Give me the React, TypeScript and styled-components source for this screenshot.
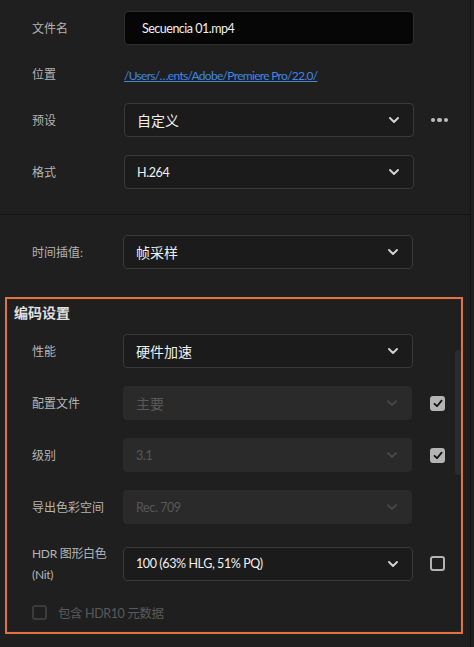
import React from "react";
import styled, { createGlobalStyle } from "styled-components";

const Global = createGlobalStyle`
  html, body { margin: 0; padding: 0; background: #1f1f1f; }
  body { font-family: "Lato", "Noto Sans CJK SC", sans-serif; }
  * { box-sizing: border-box; }
`;

const Page = styled.div`
  width: 474px;
  height: 647px;
  background: #1f1f1f;
  display: flex;
  overflow: hidden;
`;

const Panel = styled.div`
  width: 471px;
  border-right: 1px solid #121212;
  display: flex;
  flex-direction: column;
`;

const Top = styled.div`
  display: flex;
  flex-direction: column;
  padding-bottom: 25px;
  border-bottom: 1px solid #151515;
`;

const Row = styled.div<{ $mt: number; $left?: number }>`
  display: grid;
  grid-template-columns: ${(p) => (p.$left ?? 92)}px 290px 34px;
  align-items: center;
  height: 34px;
  margin-top: ${(p) => p.$mt}px;
  padding-left: 32px;
`;

const Label = styled.div`
  color: #b4b4b4;
  font-size: 12px;
  line-height: 16px;
  padding-top: 1px;
  font-family: "Lato", "Noto Sans CJK SC", sans-serif;
`;

const FileInput = styled.div`
  height: 34px;
  background: #060606;
  border: 1px solid #2e2e2e;
  border-radius: 4px;
  color: #f0f0f0;
  font-size: 12.5px;
  letter-spacing: -0.5px;
  display: flex;
  align-items: center;
  padding-left: 17px;
`;

const Link = styled.a`
  color: #4286e0;
  text-decoration: underline;
  font-size: 12px;
  white-space: nowrap;
  letter-spacing: -0.7px;
  padding-top: 2px;
`;

const Select = styled.div<{ $disabled?: boolean; $big?: boolean }>`
  height: 34px;
  width: ${(p) => (p.$disabled ? "289px" : "290px")};
  border-radius: 4px;
  background: ${(p) => (p.$disabled ? "#2a2a2a" : "#1b1b1b")};
  border: 1px solid ${(p) => (p.$disabled ? "#2a2a2a" : "#393939")};
  display: flex;
  align-items: center;
  justify-content: space-between;
  padding: 0 13px 0 12px;
  color: ${(p) => (p.$disabled ? "#585858" : "#f0f0f0")};
  font-size: ${(p) => (p.$big ? "14px" : "12.5px")};
  letter-spacing: ${(p) => (p.$big ? "0" : "-0.4px")};
`;

const Chevron = ({ disabled }: { disabled?: boolean }) => (
  <svg width="12" height="8" viewBox="0 0 12 8">
    <path
      d="M2 2 L6 6 L10 2"
      fill="none"
      stroke={disabled ? "#454545" : "#d0d0d0"}
      strokeWidth="2"
      strokeLinecap="round"
      strokeLinejoin="round"
    />
  </svg>
);

const More = styled.div`
  display: flex;
  gap: 2px;
  margin-left: 17px;
  span {
    width: 4.5px;
    height: 4.5px;
    border-radius: 50%;
    background: #bdbdbd;
  }
`;

const Box = styled.div`
  position: relative;
  margin: 28px 7px 0 5px;
  height: 337px;
  border: 2px solid #dc7443;
  box-shadow: inset 0 0 0 1px #2a201c;
  display: flex;
  flex-direction: column;
`;

const Header = styled.div`
  color: #e0e0e0;
  font-weight: 700;
  font-size: 14px;
  line-height: 20px;
  margin-top: 3px;
  padding-left: 7px;
  font-family: "Noto Sans CJK SC", sans-serif;
`;

const BoxRow = styled.div<{ $mt: number }>`
  display: grid;
  grid-template-columns: 91px 290px 34px;
  align-items: center;
  height: 34px;
  margin-top: ${(p) => p.$mt}px;
  padding-left: 25px;
`;

const Check = styled.div<{ $checked?: boolean; $disabled?: boolean }>`
  width: 15px;
  height: 15px;
  border-radius: 3px;
  margin-left: 17px;
  border: 2px solid ${(p) => (p.$disabled ? "#3c3c3c" : "#b4b4b4")};
  background: ${(p) => (p.$checked ? "#b4b4b4" : "transparent")};
  display: flex;
  align-items: center;
  justify-content: center;
`;

const Tick = () => (
  <svg width="10" height="9" viewBox="0 0 10 9">
    <path d="M1.5 4.8 L4 7.2 L8.6 1.6" fill="none" stroke="#111" strokeWidth="1.8" strokeLinecap="round" strokeLinejoin="round" />
  </svg>
);

const HdrRow = styled.div`
  display: flex;
  align-items: center;
  margin-top: 27px;
  padding-left: 25px;
  gap: 11px;
  ${Check} { margin-left: 0; }
`;

const DimText = styled.span`
  color: #5a5a5a;
  font-size: 12.5px;
  letter-spacing: -0.4px;
`;

const Thumb = styled.div`
  position: absolute;
  right: 0;
  top: 51px;
  width: 6px;
  height: 125px;
  border-radius: 3px;
  background: #2b2b2b;
`;

const TwoLine = styled(Label)`
  line-height: 21px;
  letter-spacing: -0.3px;
`;

export default function App() {
  return (
    <Page>
      <Global />
      <Panel>
        <Top>
          <Row $mt={11}>
            <Label>文件名</Label>
            <FileInput>Secuencia 01.mp4</FileInput>
          </Row>
          <Row $mt={12}>
            <Label>位置</Label>
            <Link>/Users/…ents/Adobe/Premiere Pro/22.0/</Link>
          </Row>
          <Row $mt={12}>
            <Label>预设</Label>
            <Select $big>
              <span>自定义</span>
              <Chevron />
            </Select>
            <More>
              <span />
              <span />
              <span />
            </More>
          </Row>
          <Row $mt={18}>
            <Label>格式</Label>
            <Select>
              <span>H.264</span>
              <Chevron />
            </Select>
          </Row>
        </Top>
        <Row $mt={20} $left={91}>
          <Label>时间插值:</Label>
          <Select $big>
            <span>帧采样</span>
            <Chevron />
          </Select>
        </Row>
        <Box>
          <Header>编码设置</Header>
          <BoxRow $mt={12}>
            <Label>性能</Label>
            <Select $big>
              <span>硬件加速</span>
              <Chevron />
            </Select>
          </BoxRow>
          <BoxRow $mt={18}>
            <Label>配置文件</Label>
            <Select $disabled $big>
              <span>主要</span>
              <Chevron disabled />
            </Select>
            <Check $checked>
              <Tick />
            </Check>
          </BoxRow>
          <BoxRow $mt={18}>
            <Label>级别</Label>
            <Select $disabled>
              <span>3.1</span>
              <Chevron disabled />
            </Select>
            <Check $checked>
              <Tick />
            </Check>
          </BoxRow>
          <BoxRow $mt={18}>
            <Label>导出色彩空间</Label>
            <Select $disabled>
              <span>Rec. 709</span>
              <Chevron disabled />
            </Select>
          </BoxRow>
          <BoxRow $mt={18}>
            <TwoLine>
              HDR 图形白色
              <br />
              (Nit)
            </TwoLine>
            <Select>
              <span>100 (63% HLG, 51% PQ)</span>
              <Chevron />
            </Select>
            <Check />
          </BoxRow>
          <HdrRow>
            <Check $disabled />
            <DimText>包含 HDR10 元数据</DimText>
          </HdrRow>
          <Thumb />
        </Box>
      </Panel>
    </Page>
  );
}
